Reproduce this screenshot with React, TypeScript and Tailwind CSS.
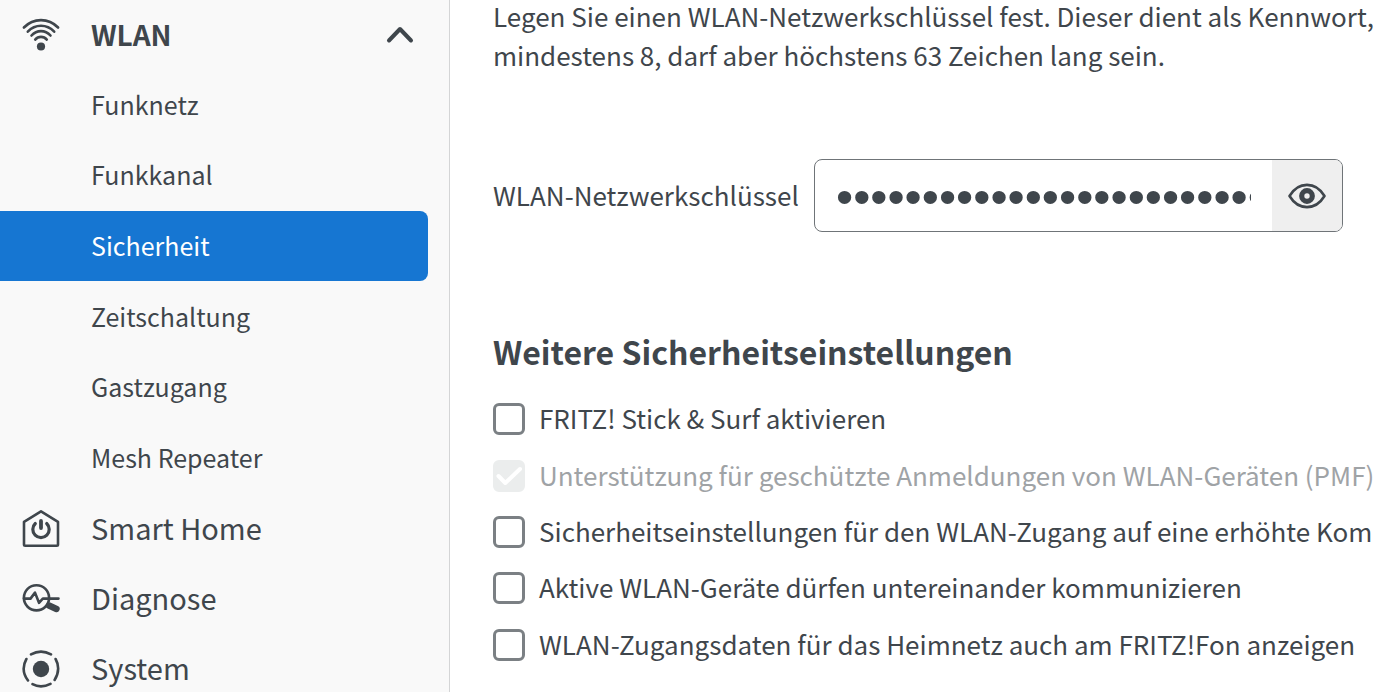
import { useState } from "react";
import type { ReactNode } from "react";

const subItems = ["Funknetz", "Funkkanal", "Sicherheit", "Zeitschaltung", "Gastzugang", "Mesh Repeater"];

const options = [
  { id: "stick", label: "FRITZ! Stick & Surf aktivieren" },
  { id: "pmf", label: "Unterstützung für geschützte Anmeldungen von WLAN-Geräten (PMF)", disabled: true },
  { id: "compat", label: "Sicherheitseinstellungen für den WLAN-Zugang auf eine erhöhte Kom" },
  { id: "clients", label: "Aktive WLAN-Geräte dürfen untereinander kommunizieren" },
  { id: "fon", label: "WLAN-Zugangsdaten für das Heimnetz auch am FRITZ!Fon anzeigen" },
];

function Icon({ children }: { children: ReactNode }) {
  return (
    <svg
      className="size-10 shrink-0"
      viewBox="0 0 40 40"
      fill="none"
      stroke="currentColor"
      strokeWidth="2.6"
      strokeLinecap="round"
      strokeLinejoin="round"
      aria-hidden="true"
    >
      {children}
    </svg>
  );
}

function WlanIcon() {
  return (
    <Icon>
      <path d="M2.9 12.5C12.500 2.6 27.500 2.600 37.100 12.500" />
      <path d="M6.800 16.700C14.200 8.800 25.800 8.800 33.200 16.700" />
      <path d="M10.500 20.500C15.800 14.600 24.200 14.600 29.500 20.500" />
      <path d="M14.200 24.600C17.300 20.900 22.700 20.900 25.800 24.600" />
      <circle cx="20" cy="31.500" r="4.100" fill="currentColor" stroke="none" />
    </Icon>
  );
}

function HomeIcon() {
  return (
    <Icon>
      <path d="M20 2.300L37 12.800V35.500Q37 36.700 35.800 36.700H4.200Q3 36.700 3 35.500V12.800Z" />
      <path d="M20 12V19" strokeWidth="3.800" />
      <path d="M14.300 14.500A8.200 8.200 0 1 0 25.700 14.500" strokeWidth="3.200" />
    </Icon>
  );
}

function DiagnoseIcon() {
  return (
    <Icon>
      <circle cx="15.500" cy="18.800" r="12.600" />
      <path d="M2.900 19.600H9.500L14 13.600L18 23.800L21.800 19.600H37.500" />
      <path d="M28 26.500L35.500 30" strokeWidth="6.400" />
    </Icon>
  );
}

function SystemIcon() {
  return (
    <Icon>
      <circle cx="20" cy="20" r="8.200" fill="currentColor" stroke="none" />
      <path d="M10 5.400Q20 -0.200 30 5.400" />
      <path d="M34.600 10Q40.200 20 33.600 31" />
      <path d="M29.500 34.900Q20 39.800 11.500 35.200" />
      <path d="M7 31.500Q-0.800 21 5.400 10" />
    </Icon>
  );
}

function EyeIcon() {
  return (
    <Icon>
      <path d="M2.500 20C11.500 5.200 28.500 5.200 37.500 20C28.500 34.800 11.500 34.800 2.500 20Z" />
      <circle cx="20" cy="20" r="5.300" strokeWidth="5.200" />
    </Icon>
  );
}

function NavItem({ icon, label }: { icon: ReactNode; label: string }) {
  return (
    <a href="#" className="flex h-[70px] items-center gap-[30px] pl-[21px] text-[29px]">
      {icon}
      <span className="pb-[3px]">{label}</span>
    </a>
  );
}

export default function App() {
  const [open, setOpen] = useState(true);
  const [showKey, setShowKey] = useState(false);

  return (
    <div className="flex h-screen overflow-hidden bg-white font-['Noto_Sans_CJK_SC','Noto_Sans',sans-serif] text-[#3f464c]">
      <nav className="w-[450px] shrink-0 border-r border-[#d4d5d6] bg-[#f9f9f9] text-[25px]">
        <button
          type="button"
          aria-expanded={open}
          onClick={() => setOpen(!open)}
          className="flex h-[70px] w-full items-center gap-[30px] pr-[35px] pl-[21px] text-[28px] font-bold"
        >
          <WlanIcon />
          <span className="flex-1 pb-[3px] text-left">WLAN</span>
          <svg className="h-7 w-7" viewBox="0 0 28 28" fill="none" stroke="currentColor" strokeWidth="4" strokeLinecap="round" strokeLinejoin="round" aria-hidden="true">
            <path d="M3 19.500L14 8L25 19.500" />
          </svg>
        </button>
        {open && (
          <ul className="flex h-[424px] flex-col">
            {subItems.map((item) => (
              <li key={item} className="flex-1">
                <a
                  href="#"
                  aria-current={item === "Sicherheit" ? "page" : undefined}
                  className="mr-[21px] flex h-[70px] items-center rounded-r-lg pb-px pl-[91px] aria-[current=page]:bg-[#1676d2] aria-[current=page]:text-white"
                >
                  {item}
                </a>
              </li>
            ))}
          </ul>
        )}
        <NavItem icon={<HomeIcon />} label="Smart Home" />
        <NavItem icon={<DiagnoseIcon />} label="Diagnose" />
        <NavItem icon={<SystemIcon />} label="System" />
      </nav>

      <main className="min-w-0 flex-1 overflow-hidden pl-[43px] text-[26px] whitespace-nowrap">
        <p className="-mt-1 leading-[39px]">
          Legen Sie einen WLAN-Netzwerkschlüssel fest. Dieser dient als Kennwort,
          <br />
          mindestens 8, darf aber höchstens 63 Zeichen lang sein.
        </p>

        <div className="mt-[85px] flex items-center">
          <label htmlFor="key" className="w-[321px] shrink-0 pb-[3px]">
            WLAN-Netzwerkschlüssel
          </label>
          <div className="flex h-[73px] w-[529px] overflow-hidden rounded-lg border border-[#6f7478]">
            <input
              id="key"
              type={showKey ? "text" : "password"}
              defaultValue="12345678901234567890123456789012"
              className="mr-[21px] ml-[21px] min-w-0 flex-1 pt-[3px] font-['Liberation_Sans',sans-serif] text-[49px] outline-none"
            />
            <button
              type="button"
              aria-label="WLAN-Netzwerkschlüssel anzeigen"
              onClick={() => setShowKey(!showKey)}
              className="flex w-[70px] items-center justify-center bg-[#efefef]"
            >
              <EyeIcon />
            </button>
          </div>
        </div>

        <h2 className="mt-[97px] text-[32px] leading-[44px] font-bold">Weitere Sicherheitseinstellungen</h2>

        <ul className="mt-[18px] flex h-[282px] flex-col">
          {options.map((option) => (
            <li key={option.id} className="flex flex-1 items-center gap-[14px]">
              <span className="grid size-8 shrink-0 place-items-center">
                <input
                  id={option.id}
                  type="checkbox"
                  defaultChecked={option.disabled}
                  disabled={option.disabled}
                  className="peer col-start-1 row-start-1 size-8 appearance-none rounded-md border-[3px] border-[#7b8084] checked:border-[#ebeded] checked:bg-[#ebeded]"
                />
                <svg className="pointer-events-none invisible col-start-1 row-start-1 size-8 text-white peer-checked:visible" viewBox="0 0 32 32" fill="none" stroke="currentColor" strokeWidth="4" strokeLinecap="round" strokeLinejoin="round" aria-hidden="true">
                  <path d="M5.500 16L12.300 23L27 9" />
                </svg>
              </span>
              <label htmlFor={option.id} className={option.disabled ? "pb-[3px] text-[#9fa3a6]" : "pb-[3px]"}>
                {option.label}
              </label>
            </li>
          ))}
        </ul>
      </main>
    </div>
  );
}
